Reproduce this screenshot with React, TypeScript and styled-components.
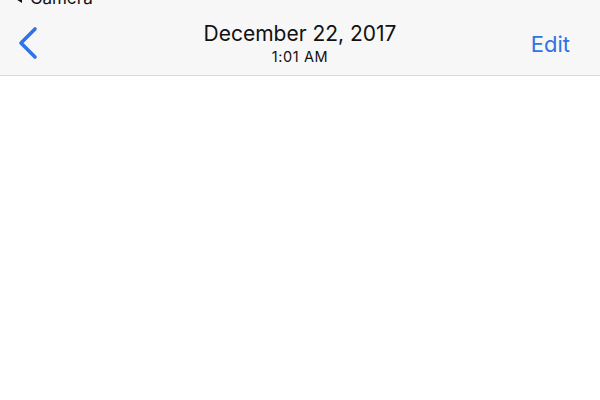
import React from "react";
import styled, { createGlobalStyle } from "styled-components";

const Global = createGlobalStyle`
  html, body { margin: 0; padding: 0; background: #ffffff; }
  body { font-family: "Inter", "Liberation Sans", sans-serif; width: 600px; height: 400px; overflow: hidden; }
`;

const Page = styled.div`
  width: 600px;
  height: 400px;
  display: flex;
  flex-direction: column;
  background: #ffffff;
  overflow: hidden;
`;

const NavBar = styled.header`
  position: relative;
  height: 75px;
  background: #f7f7f7;
  border-bottom: 1px solid #dadada;
  display: grid;
  grid-template-columns: 100px 1fr 100px;
  align-items: center;
`;

const StatusBack = styled.div`
  position: absolute;
  left: 15px;
  top: -12px;
  display: flex;
  align-items: center;
  gap: 8px;
  font-size: 17px;
  color: #111;
`;

const BackButton = styled.button`
  justify-self: start;
  margin-left: 16px;
  margin-top: 11px;
  background: none;
  border: none;
  padding: 0;
  display: flex;
  color: #2f73e6;
`;

const TitleBlock = styled.div`
  display: flex;
  flex-direction: column;
  align-items: center;
  margin-top: 12px;
  color: #111;
`;

const Title = styled.div`
  font-size: 21px;
  line-height: 25px;
`;

const Subtitle = styled.div`
  font-size: 14.5px;
  letter-spacing: 0.6px;
  line-height: 20px;
  margin-top: 1px;
`;

const EditButton = styled.button`
  justify-self: end;
  margin-right: 30px;
  margin-top: 12px;
  background: none;
  border: none;
  padding: 0;
  font-family: inherit;
  font-size: 22px;
  color: #2f73e6;
`;

const Content = styled.main`
  flex: 1;
  background: #ffffff;
`;

export default function App() {
  return (
    <>
      <Global />
      <Page>
        <NavBar>
          <StatusBack>
            <svg width="7" height="9" viewBox="0 0 7 9"><path d="M7 0 L0 4.5 L7 9 Z" fill="#111" /></svg>
            <span>Camera</span>
          </StatusBack>
          <BackButton aria-label="Back">
            <svg width="24" height="34" viewBox="0 0 24 34" fill="none">
              <path d="M19 3 L5 17 L19 31" stroke="currentColor" strokeWidth="3.6" strokeLinecap="round" strokeLinejoin="round" />
            </svg>
          </BackButton>
          <TitleBlock>
            <Title>December 22, 2017</Title>
            <Subtitle>1:01 AM</Subtitle>
          </TitleBlock>
          <EditButton>Edit</EditButton>
        </NavBar>
        <Content />
      </Page>
    </>
  );
}
